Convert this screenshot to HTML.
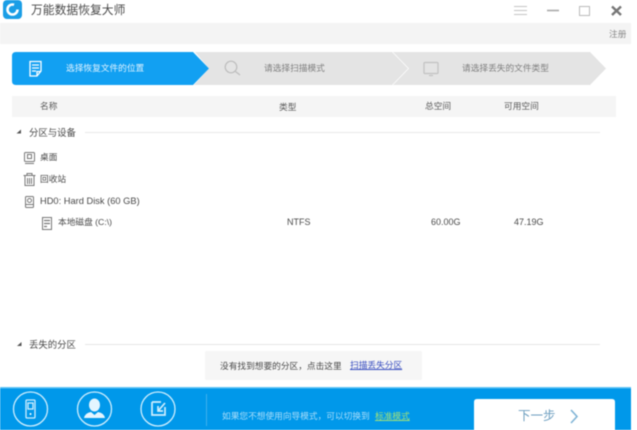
<!DOCTYPE html>
<html><head><meta charset="utf-8">
<style>
html,body{margin:0;padding:0;background:#fff;}
#w{position:relative;width:637px;height:430px;overflow:hidden;background:#fff;font-family:"Liberation Sans","Noto Sans CJK SC",sans-serif;font-size:8.7px;color:#5a5a5a;filter:blur(0.6px);}
#w div,#w svg,#w a{position:absolute;white-space:nowrap;}
.t{line-height:12px;}
</style></head><body>
<div id="w">
<svg style="left:0;top:0" width="637" height="430">
<!-- logo -->
<rect x="3" y="0" width="19" height="19" rx="4" fill="#1a9ee6"/>
<circle cx="12.500" cy="9.500" r="5" fill="none" stroke="#fff" stroke-width="2.600" stroke-dasharray="25 7"/>
<!-- window controls -->
<g stroke="#c4c4c4" stroke-width="1" fill="none"><path d="M514 6.500H527M514 10.500H527M514 14.500H527"/></g>
<path d="M547 10.500H559" stroke="#aaa" stroke-width="1.600"/>
<rect x="579.500" y="6.500" width="10" height="9" fill="none" stroke="#bbb" stroke-width="1"/>
<path d="M612 6.500L621 15M621 6.500L612 15" stroke="#777" stroke-width="2.400"/>
<!-- grey bar -->
<rect x="0" y="23" width="631" height="21" fill="#f4f4f4"/>
<!-- steps -->
<path d="M393 52H590L606 68.500L590 85H393L409 68.500Z" fill="#e4e4e4"/>
<path d="M195 52H392L408 68.500L392 85H194L209 68.500Z" fill="#e4e4e4"/>
<path d="M16 52H193L209 68.500L193 85H16Q12 85 12 81V56Q12 52 16 52Z" fill="#12a0f2"/>
<!-- step icons -->
<g fill="none" stroke="#fff" stroke-width="1.300"><path d="M30 61.500H41V71L37 76H30Z"/><path d="M32 65H39M32 68H39M32 71H36M37 76V71.500H41"/></g>
<g fill="none" stroke="#bdbdbd" stroke-width="1.200"><circle cx="231" cy="67" r="5.800"/><path d="M235.500 71.500L240 75"/></g>
<g fill="none" stroke="#c2c2c2" stroke-width="1.200"><rect x="424" y="62.500" width="14" height="11" rx="1"/><path d="M429 75.500H433"/></g>
<!-- header -->
<rect x="12" y="96" width="604" height="21" fill="#f5f5f5"/>
<!-- sections -->
<path d="M85 132.500H600" stroke="#e8e8e8"/>
<path d="M16.500 133.500L21 133.500L21 129.500Z" fill="#555"/>
<path d="M85 344.500H600" stroke="#e6e6e6"/>
<path d="M17 346L21.500 346L21.500 342Z" fill="#555"/>
<!-- tree icons -->
<g fill="none" stroke="#777" stroke-width="1">
<rect x="24.500" y="152.500" width="10" height="9" rx="1"/><rect x="27.500" y="154.500" width="4" height="4"/><path d="M25 163.500H34"/>
<path d="M23.500 175.500H35.500M27 175V173.500H32V175M25 176V185.500H34V176M27.500 178V184M29.500 178V184M31.500 178V184"/>
<rect x="25.500" y="196.500" width="8" height="11" rx="1"/><circle cx="29.500" cy="200.500" r="2"/><path d="M26 204.500H33"/>
<rect x="42.500" y="217.500" width="9" height="12"/><path d="M44 220.500H50M44 223.500H50M44 226.500H47" stroke-width="1.300"/>
</g>
<!-- notice box -->
<rect x="205" y="351" width="217" height="29" rx="2" fill="#f6f6f6"/>
<!-- footer -->
<rect x="0" y="388" width="631" height="42" fill="#0098ea"/>
<rect x="0" y="387" width="631" height="1.500" fill="#5cc2f5"/>
<g fill="none" stroke="#cfeefe" stroke-width="1.300">
<circle cx="30.500" cy="409" r="17"/><circle cx="94.500" cy="409" r="17"/><circle cx="158" cy="409" r="17"/>
<rect x="26" y="400" width="9" height="18" rx="1"/><rect x="28" y="403" width="5" height="6"/>
<path d="M152 402H161M152 402V415H165V407M158 411L165 403M158 406V411H163" stroke-width="1.700"/>
</g>
<circle cx="30.500" cy="414" r="1" fill="#fff"/>
<ellipse cx="94.500" cy="405" rx="5.500" ry="6.500" fill="#e4f5ff"/>
<path d="M84 418Q85 413 91 412L94.500 415L98 412Q104 413 105 418Z" fill="#e4f5ff"/>
<path d="M206.500 394V426" stroke="#3fb0ee"/>
<!-- button -->
<path d="M474 430V402Q474 399 477 399H612Q615 399 615 402V430Z" fill="#fff"/>
<path d="M571 410L577 416.500L571 423" fill="none" stroke="#7fb4d6" stroke-width="1.600"/>
</svg>

<div class="t" style="left:31px;top:3px;font-size:11.800px;line-height:14px;color:#4a4a4a">万能数据恢复大师</div>
<div class="t" style="left:609px;top:28px;color:#888">注册</div>
<div class="t" style="left:66px;top:62px;color:#dff2ff">选择恢复文件的位置</div>
<div class="t" style="left:264px;top:62px;color:#808080">请选择扫描模式</div>
<div class="t" style="left:462px;top:62px;color:#808080">请选择丢失的文件类型</div>
<div class="t" style="left:40px;top:100px">名称</div>
<div class="t" style="left:279px;top:101px">类型</div>
<div class="t" style="left:425px;top:100px">总空间</div>
<div class="t" style="left:504px;top:100px">可用空间</div>
<div class="t" style="left:29px;top:127px;color:#4a4a4a;font-size:9.400px">分区与设备</div>
<div class="t" style="left:40px;top:151px;color:#4a4a4a">桌面</div>
<div class="t" style="left:40px;top:173px;color:#4a4a4a">回收站</div>
<div class="t" style="left:40px;top:195px;color:#4a4a4a;font-size:9.300px">HD0: Hard Disk (60 GB)</div>
<div class="t" style="left:58px;top:216px;color:#4a4a4a">本地磁盘 (C:\)</div>
<div class="t" style="left:287px;top:216px;color:#4a4a4a;font-size:9px">NTFS</div>
<div class="t" style="left:431px;top:216px;color:#4a4a4a;font-size:9px">60.00G</div>
<div class="t" style="left:514px;top:216px;color:#4a4a4a;font-size:9px">47.19G</div>
<div class="t" style="left:29px;top:339px;color:#4a4a4a;font-size:9.400px">丢失的分区</div>
<div class="t" style="left:220px;top:360px;color:#4a4a4a">没有找到想要的分区，点击这里</div>
<div class="t" style="left:350px;top:359px;color:#3a4fc0;text-decoration:underline">扫描丢失分区</div>
<div class="t" style="left:222px;top:410px;color:#a8ddfa">如果您不想使用向导模式，可以切换到</div>
<div class="t" style="left:375px;top:410px;color:#9fe07a;text-decoration:underline">标准模式</div>
<div class="t" style="left:518px;top:409px;color:#6e9fc0;font-size:12.500px;line-height:15px">下一步</div>
</div>
</body></html>
